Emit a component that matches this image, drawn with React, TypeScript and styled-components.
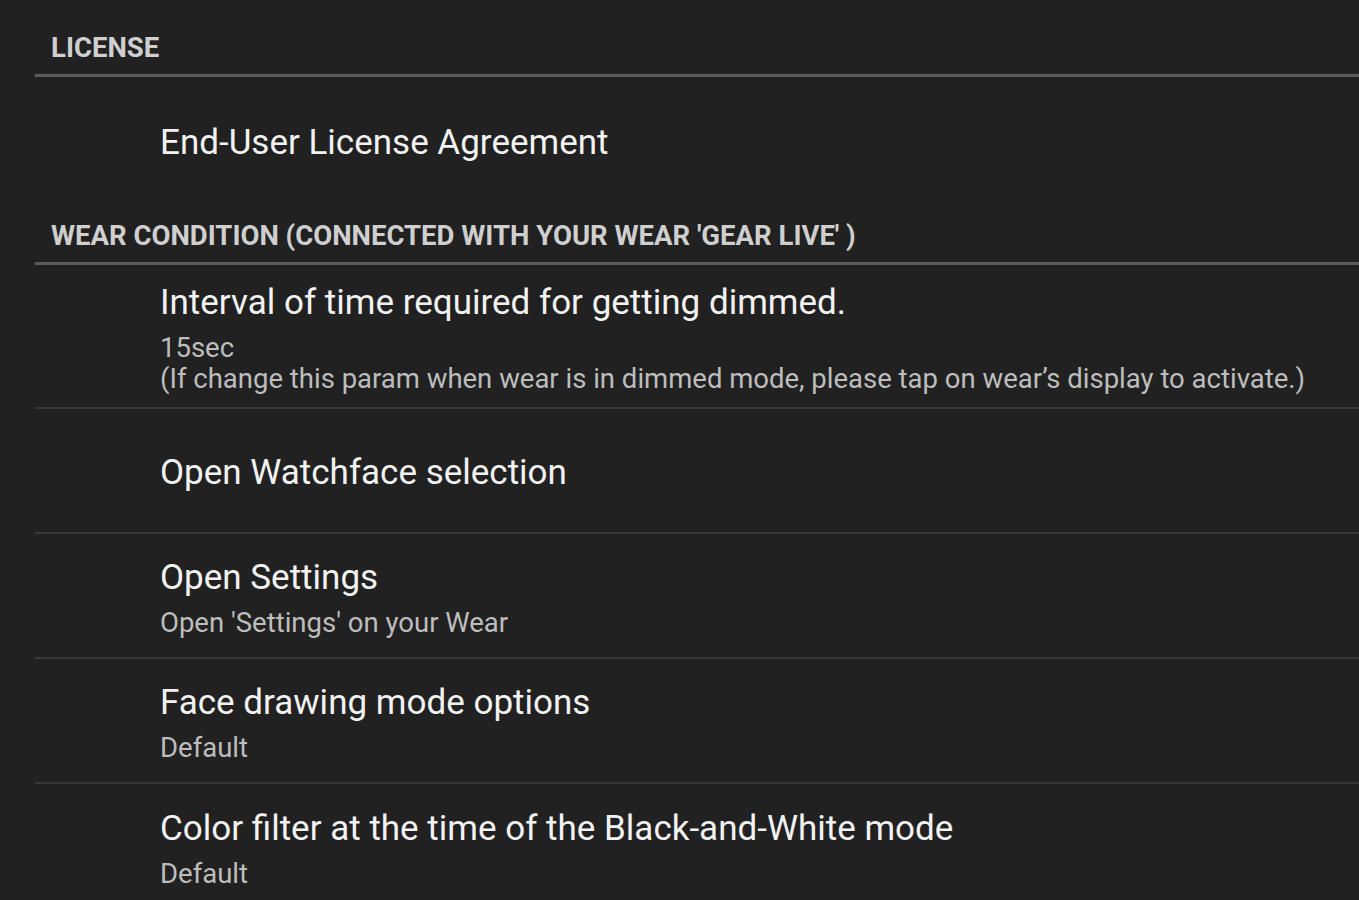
import React from "react";
import styled, { createGlobalStyle } from "styled-components";

const Global = createGlobalStyle`
  html, body { margin: 0; padding: 0; background: #212121; }
  body { font-family: Roboto, "Noto Sans", sans-serif; -webkit-font-smoothing: antialiased; }
`;

const Page = styled.div`
  width: 1359px;
  height: 900px;
  overflow: hidden;
  background: #212121;
  padding: 17px 0 0 35px;
  box-sizing: border-box;
`;

const SectionHeader = styled.div`
  padding: 16px 0 11px 16px;
  border-bottom: 3px solid #5b5b5b;
  font-size: 27.5px;
  line-height: 30px;
  font-weight: 700;
  color: #cfcfcf;
  white-space: nowrap;
`;

const Row = styled.div<{ $divider?: boolean; $h?: number }>`
  min-height: ${(p) => p.$h ?? 125}px;
  padding: 17px 0 13px 125px;
  box-sizing: border-box;
  display: flex;
  flex-direction: column;
  justify-content: center;
  border-bottom: ${(p) => (p.$divider ? "2px solid #383838" : "none")};
`;

const Title = styled.div`
  font-size: 35px;
  line-height: 42px;
  color: #f2f2f2;
  white-space: nowrap;
`;

const Summary = styled.div`
  font-size: 27.5px;
  line-height: 31px;
  color: #bdbdbd;
  white-space: nowrap;
  ${Title} + & { margin-top: 8px; }
`;

type Item = { title: string; lines?: string[] };

const wearItems: Item[] = [
  {
    title: "Interval of time required for getting dimmed.",
    lines: [
      "15sec",
      "(If change this param when wear is in dimmed mode, please tap on wear\u2019s display to activate.)",
    ],
  },
  { title: "Open Watchface selection" },
  { title: "Open Settings", lines: ["Open 'Settings' on your Wear"] },
  { title: "Face drawing mode options", lines: ["Default"] },
  { title: "Color filter at the time of the Black-and-White mode", lines: ["Default"] },
];

export default function App() {
  return (
    <>
      <Global />
      <Page>
        <SectionHeader>LICENSE</SectionHeader>
        <Row $h={128}>
          <Title>End-User License Agreement</Title>
        </Row>
        <SectionHeader>WEAR CONDITION (CONNECTED WITH YOUR WEAR 'GEAR LIVE' )</SectionHeader>
        {wearItems.map((it, i) => (
          <Row key={i} $divider={i < wearItems.length - 1}>
            <Title>{it.title}</Title>
            {it.lines?.map((l, j) => (
              <Summary key={j}>{l}</Summary>
            ))}
          </Row>
        ))}
      </Page>
    </>
  );
}
